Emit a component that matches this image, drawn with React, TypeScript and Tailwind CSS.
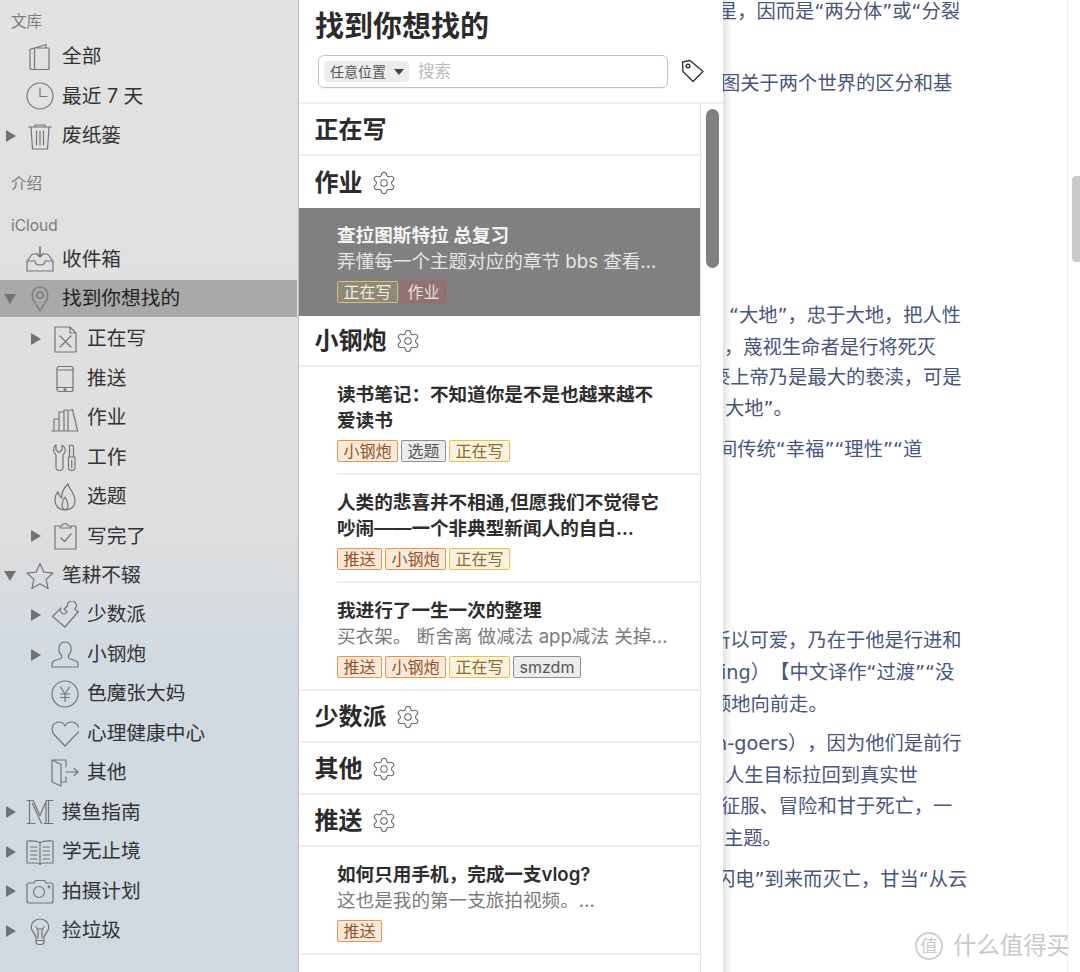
import type { ReactNode } from 'react';
import { Settings } from 'lucide-react';

const FONT = 'font-["Inter","Noto_Sans_CJK_SC",sans-serif]';

function Ico({ children, className = '' }: { children: ReactNode; className?: string }) {
  return (
    <svg viewBox="0 0 28 28" fill="none" stroke="#757575" strokeWidth="1.2" strokeLinecap="round" strokeLinejoin="round" className={`w-[28px] h-[28px] shrink-0 ${className}`}>
      {children}
    </svg>
  );
}

const icons: Record<string, ReactNode> = {
  book: <><path d="M4 6.500 20 1.500V5M4 6.500V24.500Q4 26.500 6 26.500H23V5H9Q6 5 4 6.500ZM8.500 5V26.500" /></>,
  clock: <><circle cx="14" cy="14" r="13" /><path d="M14 6v8.500h7" /></>,
  trash: <><path d="M2.500 5h23M9 5V3h10v2M5 5l1.500 22h15L23 5M10.500 9v14M14 9v14M17.500 9v14" /></>,
  inbox: <><path d="M14 1v10M10.500 7.500 14 11l3.500-3.500" strokeWidth="1.600" /><path d="M9 8H6.500L1 15v10h26V15l-5.500-7H19M1 15h8q0 4 5 4t5-4h8" /></>,
  pin: <><path d="M14 26 7 14.500C4.500 9 8 2 14 2s9.500 7 7 12.500Z" /><circle cx="14" cy="10" r="3.200" /></>,
  fileX: <><path d="M4 2h15l6 6v19H4ZM19 2v6h6M9 11l11 11M20 11 9 22" /></>,
  phone: <><rect x="6" y="1.500" width="16" height="25" rx="2" /><path d="M6 5h16M6 22.500h16" /><circle cx="14" cy="24.500" r="1" /></>,
  books: <><path d="M1 27h26M3 27V15h5v12M8 27V8h5v19M13 27V6h4v21M18.500 6.500l3-1 5 21" /></>,
  tools: <><path d="M5 2v5l3 2.500L11 7V2q4 2.500 3 7l-2 3v13q-.5 2.500-3.500 2.500T5 25V12L3 9Q1.500 5 5 2ZM20 2q2.500 0 2.500 2.500v9.500h-4V4.500Q18 2 20 2ZM17.500 14H24v11q0 2.500-3.250 2.500T17.500 25ZM20.750 17v8" /></>,
  flame: <><path d="M17 1C18 6 24 10 24 18 24 24 19 27 14 27 8 27 4 23 4 17 4 13 5 11 7 9 8 12 9 14 11 15 10 10 13 5 17 1ZM14 27C10 25 10 20 14 14 18 20 18 25 14 27" /></>,
  clip: <><path d="M9 4H4v23h21V4h-5M9 6h11V4h-3q-.5-2.500-3-2.500T11 4H9ZM10 16l3.500 3.500L20 12" /></>,
  star: <><path d="m14 1.500 3.800 8.600 9.300 1-7 6.200 2 9.200L14 21.800l-8.100 4.700 2-9.200-7-6.200 9.300-1Z" /></>,
  puzzle: <><path d="M14 26 1.500 15.500 10 7q-2 3 1 5t5-1l-3-3 3.500-3q-1-3 2.500-4.500t5.500 1.500 0 5 3 3.500Z" /></>,
  user: <><path d="M1 26v-3q0-2.500 3-3.500l6-2q1-1 .5-3-3-3-2.500-8Q9 1 14 1t6 5.500q.5 5-2.500 8-.5 2 .5 3l6 2q3 1 3 3.500v3Z" /></>,
  yen: <><circle cx="14" cy="14" r="13" /><path d="m9.500 7 4.500 7 4.500-7M14 14v7.500M9.500 14h9M9.500 17.500h9" /></>,
  heart: <><path d="M14 26 3 14.500C-1 9 2 2 8 2q4 0 6 4 2-4 6-4 6 0 9 7-.5 3-4 5.500Z" /></>,
  door: <><path d="M15 8V1H1v22l9 4V5.500L1 1M10 23h5v-5M15 13h12M23 9.500l4 3.500-4 3.500" /></>,
  medium: <><path d="M1 2.500h6l7 15 6.500-15H27M1 25.500h8M18 25.500h9M3.500 2.500v23M22.500 2.500v23M20 5v20.500M6.500 5.500l9 20" /></>,
  open: <><path d="M14 5Q11 2.500 2 3H1v22h9q3 0 4 1.500 1-1.500 4-1.500h9V3h-1q-9-.5-12 2ZM14 5v21.500M4.500 9h6.500M4.500 13h6.500M4.500 17h6.500M4.500 21h6.500M17 9h6.500M17 13h6.500M17 17h6.500M17 21h6.500" /></>,
  camera: <><path d="M3 6h5l1.500-2.500h9L20 6h5q2 0 2 2v16q0 2-2 2H3q-2 0-2-2V8q0-2 2-2Z" /><circle cx="13" cy="15" r="5.500" /><circle cx="23" cy="10" r=".8" /></>,
  bulb: <><path d="M10 21v5l2 1.500h4l2-1.500v-5q0-3 3-6 3.500-5 0-10-3-3-7-3T7 5q-3.500 5 0 10 3 3 3 6ZM10 23.500h8M12 21v-8l-2-3M16 21v-8l2-3M12 13q2-3 4 0" /></>,
};

type RowProps = { label: string; icon: string; nested?: boolean; arrow?: 'right' | 'down' };

function Arrow({ dir }: { dir?: 'right' | 'down' }) {
  if (dir === 'right') return <span className="w-0 h-0 ml-[1px] mr-[1px] border-y-[6px] border-y-transparent border-l-[10.500px] border-l-[#727272]" />;
  if (dir === 'down') return <span className="w-0 h-0 -ml-[1px] border-x-[6.500px] border-x-transparent border-t-[10px] border-t-[#727272]" />;
  return <span className="w-[12px]" />;
}

function Row({ label, icon, nested, arrow }: RowProps) {
  return (
    <div className={`h-[39.450px] flex items-center ${nested ? 'pl-[30px]' : 'pl-[5px]'}`}>
      <span className="w-[12px] flex justify-start">
        <Arrow dir={arrow} />
      </span>
      <span className="ml-[9px]">
        <Ico>{icons[icon]}</Ico>
      </span>
      <span className="ml-[8px] text-[19.700px] text-[#333333]">{label}</span>
    </div>
  );
}

function Sidebar() {
  return (
    <aside className="w-[299px] shrink-0 h-full overflow-hidden border-r border-r-[#b9bcbe] bg-[linear-gradient(180deg,#e2e2e2_0%,#dededf_55%,#d1dae0_68%,#cfd9df_100%)]">
      <div className="h-[37.300px] pt-[12px] pl-[11px] text-[15.500px] leading-[20px] text-[#7c7c7c]">文库</div>
      <Row icon="book" label="全部" />
      <Row icon="clock" label="最近 7 天" />
      <Row icon="trash" label="废纸篓" arrow="right" />
      <div className="h-[28px] mt-[14.500px] pl-[11px] text-[15.500px] leading-[28px] text-[#7c7c7c]">介绍</div>
      <div className="h-[28px] mt-[14px] pl-[11px] text-[15.500px] leading-[28px] text-[#7c7c7c]">iCloud</div>
      <Row icon="inbox" label="收件箱" />
      <div className="mr-[1px] bg-[#a9a9a9] h-[37px] mb-[2.900px] pt-[1px] flex items-center pl-[5px]">
        <span className="w-[12px] flex">
          <Arrow dir="down" />
        </span>
        <span className="ml-[9px]">
          <Ico>{icons.pin}</Ico>
        </span>
        <span className="text-[19.700px] text-[#222222] ml-[8px]">找到你想找的</span>
      </div>
      <Row nested icon="fileX" label="正在写" arrow="right" />
      <Row nested icon="phone" label="推送" />
      <Row nested icon="books" label="作业" />
      <Row nested icon="tools" label="工作" />
      <Row nested icon="flame" label="选题" />
      <Row nested icon="clip" label="写完了" arrow="right" />
      <Row icon="star" label="笔耕不辍" arrow="down" />
      <Row nested icon="puzzle" label="少数派" arrow="right" />
      <Row nested icon="user" label="小钢炮" arrow="right" />
      <Row nested icon="yen" label="色魔张大妈" />
      <Row nested icon="heart" label="心理健康中心" />
      <Row nested icon="door" label="其他" />
      <Row icon="medium" label="摸鱼指南" arrow="right" />
      <Row icon="open" label="学无止境" arrow="right" />
      <Row icon="camera" label="拍摄计划" arrow="right" />
      <Row icon="bulb" label="捡垃圾" arrow="right" />
    </aside>
  );
}

function Chip({ text, kind, dark }: { text: string; kind: 'yellow' | 'orange' | 'gray' | 'red'; dark?: boolean }) {
  const tone = dark
    ? kind === 'yellow'
      ? 'border-[#e0bd6a] bg-[#8f8a78] text-[#f3ecd8]'
      : 'border-[#b45c5c] bg-[#8e7474] text-[#f0dede]'
    : kind === 'yellow'
      ? 'border-[#ebbf4c] bg-[#fbf3dd] text-[#8a6c2e]'
      : kind === 'orange'
        ? 'border-[#ee9345] bg-[#fce9da] text-[#8d5427]'
        : 'border-[#909090] bg-[#ececec] text-[#555555]';
  return <span className={`h-[22px] px-[5.500px] border rounded-[2px] text-[16px] leading-[20px] whitespace-nowrap ${tone}`}>{text}</span>;
}

function Section({ title, gear = true, last }: { title: string; gear?: boolean; last?: boolean }) {
  return (
    <div className={`h-[51.750px] flex items-center pl-[15.500px] pt-[2px] gap-[8px] ${last ? '' : 'border-b-2 border-b-[#eeeeee]'}`}>
      <span className="text-[24px] font-semibold text-[#2b2b2b]">{title}</span>
      {gear && <Settings size={26} strokeWidth={1} color="#666666" />}
    </div>
  );
}

function Note({ lines, desc, chips, selected, wide }: { lines: string[]; desc?: string; chips: ReactNode; selected?: boolean; wide?: boolean }) {
  return (
    <div className={`h-[108px] ${wide ? 'border-b-2 border-b-[#eeeeee]' : ''} ${selected ? 'bg-[#808080]' : ''}`}>
      <div className={`ml-[38px] h-full pt-[14px] ${!wide && !selected ? 'border-b-2 border-b-[#eeeeee]' : ''}`}>
        {lines.map((t) => (
          <div key={t} className={`h-[26px] text-[18.600px] leading-[26px] font-semibold whitespace-nowrap ${selected ? 'text-[#f4f4f4]' : 'text-[#2e2e2e]'}`}>{t}</div>
        ))}
        {desc && <div className={`h-[26px] text-[18.600px] leading-[26px] whitespace-nowrap ${selected ? 'text-[#e6e6e6]' : 'text-[#7a7a7a]'}`}>{desc}</div>}
        <div className="flex gap-[3px] mt-[7px]">{chips}</div>
      </div>
    </div>
  );
}

function ListPanel() {
  return (
    <section className="w-[424px] shrink-0 h-full flex flex-col bg-white">
      <div className="h-[104px] shrink-0 border-b-2 border-b-[#eeeeee] pl-[16px]">
        <h1 className="pt-[7px] h-[55px] text-[29px] leading-[40px] font-semibold text-[#2b2b2b]">找到你想找的</h1>
        <div className="flex items-center">
          <div className="ml-[3px] w-[350px] h-[33px] border-[1.500px] border-[#c4c4c4] rounded-[6px] flex items-center pl-[5px] shadow-[0_1px_1px_rgba(0,0,0,0.06)]">
            <div className="w-[85px] h-[21px] rounded-[4px] bg-[#ececec] flex items-center pl-[6px] text-[14px] text-[#555555]">
              任意位置
              <span className="ml-[8px] w-0 h-0 border-x-[5px] border-x-transparent border-t-[6px] border-t-[#444444]" />
            </div>
            <span className="ml-[9px] text-[16.500px] text-[#bbbbbb]">搜索</span>
          </div>
          <svg viewBox="0 0 24 24" fill="none" stroke="#333333" strokeWidth="1.400" strokeLinejoin="round" className="ml-[13px] w-[24px] h-[24px] -mt-[2px]">
            <path d="M1.500 3 9 1.500 22 12.500 12 22.500 2 12.500Z" />
            <circle cx="7" cy="7" r="1.800" />
          </svg>
        </div>
      </div>
      <div className="flex-1 flex min-h-0">
        <div className="w-[401px] shrink-0 overflow-hidden">
          <Section title="正在写" gear={false} />
          <Section title="作业" last />
          <Note
            selected
            lines={['查拉图斯特拉 总复习']}
            desc="弄懂每一个主题对应的章节 bbs 查看…"
            chips={<><Chip dark text="正在写" kind="yellow" /><Chip dark text="作业" kind="red" /></>}
          />
          <Section title="小钢炮" />
          <Note
            lines={['读书笔记：不知道你是不是也越来越不', '爱读书']}
            chips={<><Chip text="小钢炮" kind="orange" /><Chip text="选题" kind="gray" /><Chip text="正在写" kind="yellow" /></>}
          />
          <Note
            lines={['人类的悲喜并不相通,但愿我们不觉得它', '吵闹——一个非典型新闻人的自白…']}
            chips={<><Chip text="推送" kind="orange" /><Chip text="小钢炮" kind="orange" /><Chip text="正在写" kind="yellow" /></>}
          />
          <Note
            wide
            lines={['我进行了一生一次的整理']}
            desc="买衣架。 断舍离 做减法 app减法 关掉…"
            chips={<><Chip text="推送" kind="orange" /><Chip text="小钢炮" kind="orange" /><Chip text="正在写" kind="yellow" /><Chip text="smzdm" kind="gray" /></>}
          />
          <Section title="少数派" />
          <Section title="其他" />
          <Section title="推送" />
          <Note
            wide
            lines={['如何只用手机，完成一支vlog?']}
            desc="这也是我的第一支旅拍视频。…"
            chips={<Chip text="推送" kind="orange" />}
          />
        </div>
        <div className="flex-1 border-l border-l-[#e4e4e4] pl-[5px] pt-[5px]">
          <div className="w-[13px] h-[159px] rounded-full bg-[#808080]" />
        </div>
      </div>
    </section>
  );
}

function Line({ text, className }: { text: string; className: string }) {
  return <p className={`h-[32px] whitespace-nowrap font-["DejaVu_Sans","Noto_Sans_CJK_SC",sans-serif] [text-spacing-trim:space-all] text-[19.300px] leading-[32px] text-[#47557f] ${className}`}>{text}</p>;
}

function Article() {
  return (
    <main className="relative flex-1 h-full flex bg-white overflow-hidden shadow-[inset_12px_0_10px_-10px_rgba(0,0,0,0.18)]">
      <div className="flex-1 min-w-0 overflow-hidden">
        <Line className="-mt-[4px] -ml-[5px]" text="星，因而是“两分体”或“分裂" />
        <Line className="mt-[40px] -ml-[2px]" text="图关于两个世界的区分和基" />
        <Line className="mt-[200px] ml-[6px]" text="“大地”，忠于大地，把人性" />
        <Line className="ml-[1px]" text="，蔑视生命者是行将死灭" />
        <Line className="-mt-[2px] -ml-[12px]" text="亵上帝乃是最大的亵渎，可是" />
        <Line className="-mt-[1px] ml-[2px]" text="大地”。" />
        <Line className="mt-[9px] -ml-[5px]" text="间传统“幸福”“理性”“道" />
        <Line className="mt-[159px] -ml-[12px]" text="所以可爱，乃在于他是行进和" />
        <Line className="-ml-[2px]" text="ing）【中文译作“过渡”“没" />
        <Line className="-ml-[11px]" text="顺地向前走。" />
        <Line className="mt-[7px] -ml-[8px]" text="n-goers），因为他们是前行" />
        <Line className="ml-[2px]" text="人生目标拉回到真实世" />
        <Line className="-mt-[1px] -ml-[2px]" text="征服、冒险和甘于死亡，一" />
        <Line className="ml-[1px]" text="主题。" />
        <Line className="mt-[9px] -ml-[7px]" text="闪电”到来而灭亡，甘当“从云" />
      </div>
      <div className="w-[13px] shrink-0 border-l border-l-[#eeeeee] pl-[4px] pt-[176px]">
        <div className="w-[9px] h-[86px] rounded-l-[4px] bg-[#c9c9c9]" />
      </div>
      {/* watermark */}
      <div className="absolute left-[192px] top-[932px] flex items-center gap-[10px] text-[#c9c9c9]">
        <span className="w-[28px] h-[28px] rounded-full border-2 border-[#d0d0d0] flex items-center justify-center text-[17px] leading-none">值</span>
        <span className="text-[23.400px] leading-[28px] whitespace-nowrap">什么值得买</span>
      </div>
    </main>
  );
}

export default function App() {
  return (
    <div className={`w-[1080px] h-[972px] overflow-hidden flex bg-white ${FONT}`}>
      <Sidebar />
      <ListPanel />
      <Article />
    </div>
  );
}
